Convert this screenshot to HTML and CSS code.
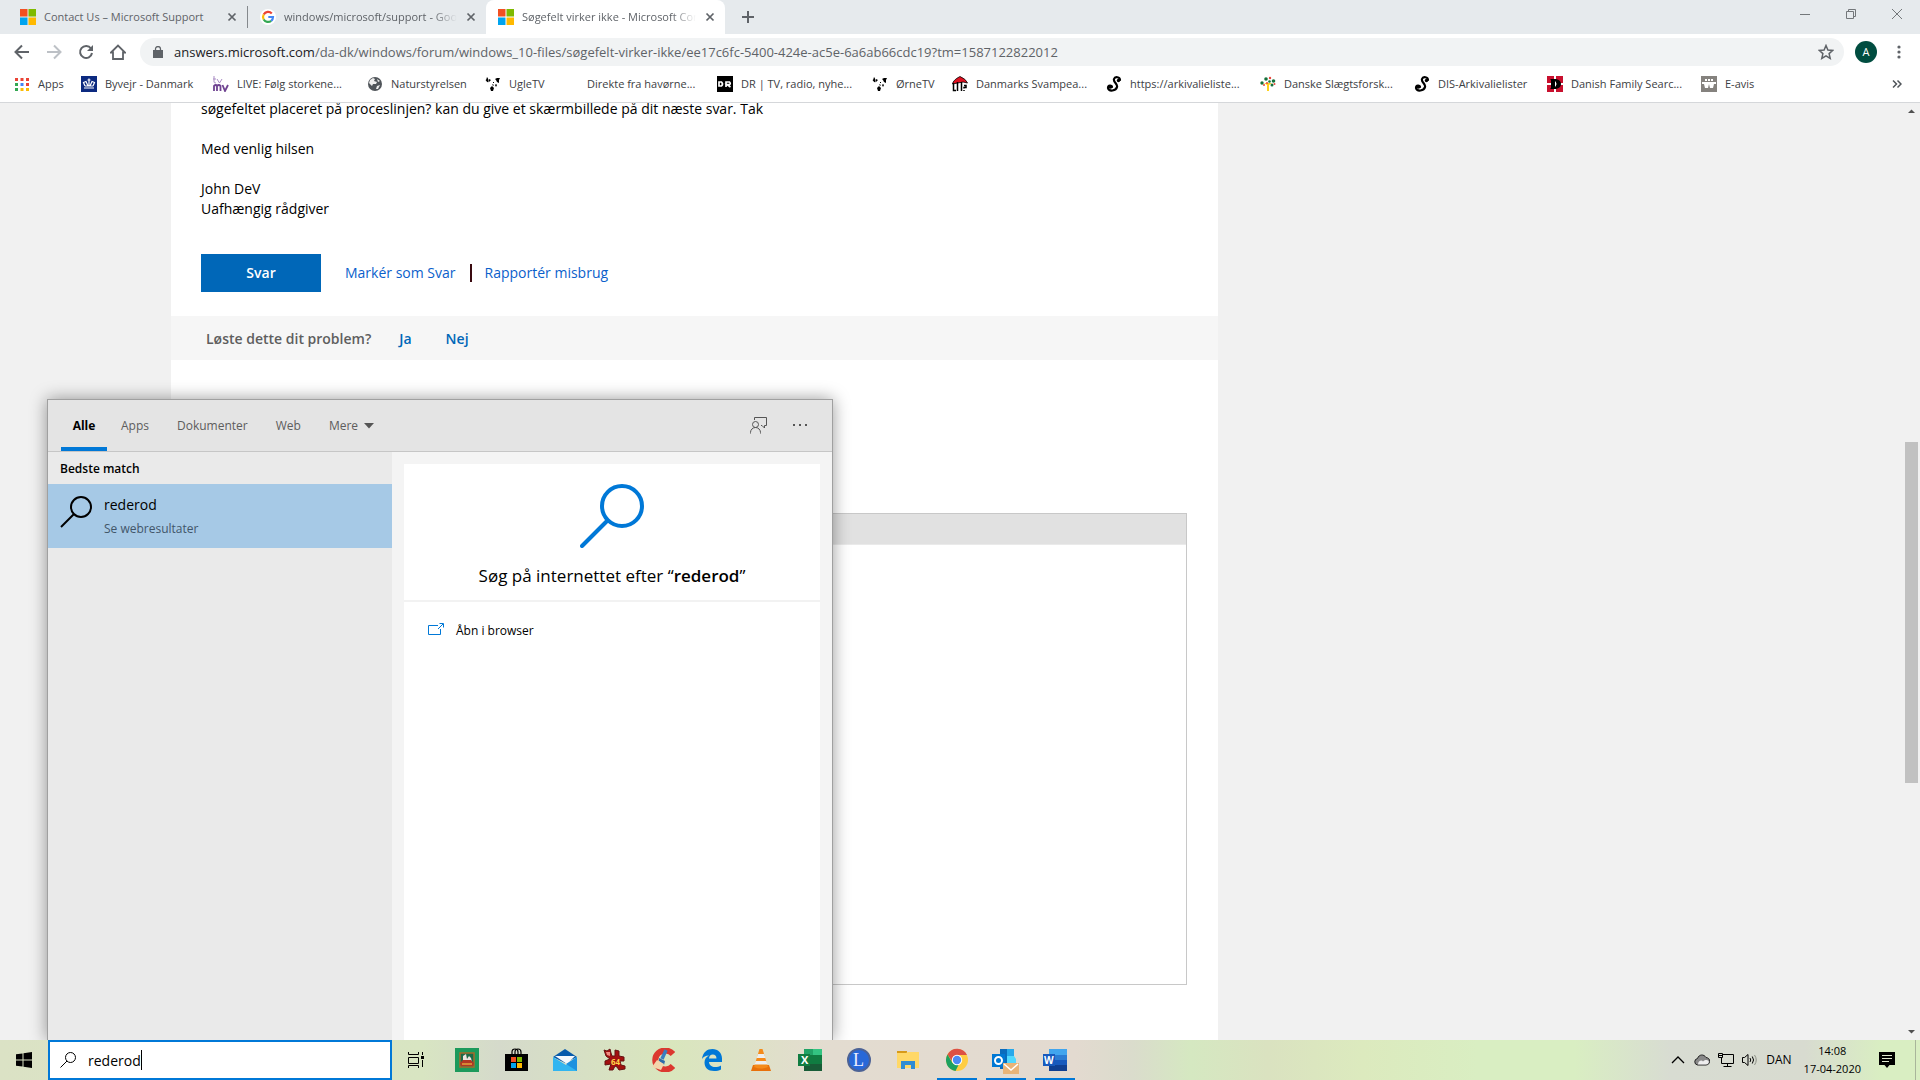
FILE: index.html
```html
<!DOCTYPE html>
<html lang="da">
<head>
<meta charset="utf-8">
<title>Søgefelt virker ikke - Microsoft Community</title>
<link rel="stylesheet" href="styles.css">
</head>
<body>
<svg class="defs" aria-hidden="true">
  <symbol id="ms" viewBox="0 0 16 16"><path fill="#f25022" d="M0 0h7.5v7.5H0z"/><path fill="#7fba00" d="M8.500 0H16v7.500H8.500z"/><path fill="#00a4ef" d="M0 8.500h7.500V16H0z"/><path fill="#ffb900" d="M8.500 8.500H16V16H8.500z"/></symbol>
  <symbol id="x" viewBox="0 0 10 10"><path d="M1.500 1.500l7 7m0-7l-7 7" stroke="#5f6368" stroke-width="1.700" fill="none"/></symbol>
  <symbol id="birds" viewBox="0 0 16 16"><path d="M2 1c1 1 2 3 1.500 5-1 1-2-1-3-2 1 0 1-2 1.500-3zM4 3l2 1-2 2zM10 3l2-1 3 0-1 2 0 3-2-1-1-2zM7 8l2 1-1 1zM5 12l2-2 2 2-1 3-2 0zM10 9l1-1 1 1-1 2zM8 6h1v1H8z"/></symbol>
  <symbol id="ess" viewBox="0 0 16 16"><path d="M14 4c0-3-5-4-6-1-1 3 4 5 3 8-1 4-8 5-9 1 0-3 4-3 4-1" fill="none" stroke="#000" stroke-width="2.200" stroke-linecap="round"/><circle cx="12.500" cy="4.500" r="1.700"/><circle cx="4.500" cy="11" r="1.800"/></symbol>
  <symbol id="mag" viewBox="0 0 32 32"><circle cx="21" cy="11" r="10"/><path d="M14 18L1 31"/></symbol>
</svg>
<div class="window">
  <header class="chrome">
    <div class="tabstrip">
      <div class="tab"><svg class="i16"><use href="#ms"/></svg><span class="tab-title">Contact Us – Microsoft Support</span><button class="tab-close" aria-label="Luk fane"><svg><use href="#x"/></svg></button></div>
      <div class="tab divided"><svg class="i16" viewBox="0 0 16 16"><circle cx="8" cy="8" r="8" fill="#fff"/><g fill="none" stroke-width="2.200"><path d="M11.800 4.500A5 5 0 0 0 3.700 5.500" stroke="#ea4335"/><path d="M3.700 5.500a5 5 0 0 0 0 5" stroke="#fbbc05"/><path d="M3.700 10.500a5 5 0 0 0 7.500 1.300" stroke="#34a853"/><path d="M11.200 11.800A5 5 0 0 0 13 8H8.300" stroke="#4285f4"/></g></svg><span class="tab-title fade">windows/microsoft/support - Google-søgning</span><button class="tab-close" aria-label="Luk fane"><svg><use href="#x"/></svg></button></div>
      <div class="tab active"><svg class="i16"><use href="#ms"/></svg><span class="tab-title fade">Søgefelt virker ikke - Microsoft Community</span><button class="tab-close" aria-label="Luk fane"><svg><use href="#x"/></svg></button></div>
      <button class="new-tab" aria-label="Ny fane"><svg viewBox="0 0 14 14"><path d="M7 1v12M1 7h12" stroke="#5f6368" stroke-width="2"/></svg></button>
      <div class="win-controls">
        <button aria-label="Minimer"><svg viewBox="0 0 10 10"><path d="M0 5.500h10"/></svg></button>
        <button aria-label="Gendan"><svg viewBox="0 0 10 10"><path d="M.5 2.500h7v7h-7zM2.500 2.500v-2h7v7h-2"/></svg></button>
        <button aria-label="Luk"><svg viewBox="0 0 10 10"><path d="M0 0l10 10M10 0L0 10"/></svg></button>
      </div>
    </div>
    <div class="toolbar">
      <button aria-label="Tilbage"><svg viewBox="0 0 16 16"><path d="M15 8H2M8 1.500L1.500 8 8 14.500" fill="none" stroke="#5f6368" stroke-width="2"/></svg></button>
      <button aria-label="Frem"><svg viewBox="0 0 16 16"><path d="M1 8h13M8 1.500L14.500 8 8 14.500" fill="none" stroke="#bdc1c6" stroke-width="2"/></svg></button>
      <button aria-label="Genindlæs"><svg viewBox="0 0 16 16"><path d="M13 4.500A6 6 0 1 0 14 9" fill="none" stroke="#5f6368" stroke-width="2"/><path d="M15 1v6H9z" fill="#5f6368"/></svg></button>
      <button aria-label="Startside"><svg viewBox="0 0 16 16"><path d="M1 8.500L8 1.500l7 7h-2V15H3V8.500z" fill="none" stroke="#5f6368" stroke-width="1.800"/></svg></button>
      <div class="omnibox">
        <svg class="lock" viewBox="0 0 10 12"><path d="M0 4h10v8H0z" fill="#5f6368"/><path d="M2.500 4.500V3a2.500 2.500 0 0 1 5 0v1.500" fill="none" stroke="#5f6368" stroke-width="1.300"/></svg>
        <span class="url"><b>answers.microsoft.com</b>/da-dk/windows/forum/windows_10-files/søgefelt-virker-ikke/ee17c6fc-5400-424e-ac5e-6a6ab66cdc19?tm=1587122822012</span>
        <button aria-label="Tilføj bogmærke"><svg viewBox="0 0 16 16"><path d="M8 1.500l1.900 4.500 4.900.4-3.700 3.200 1.100 4.800L8 11.800l-4.200 2.600 1.100-4.800L1.200 6.400 6.100 6z" fill="none" stroke="#5f6368" stroke-width="1.500"/></svg></button>
      </div>
      <button class="avatar">A</button>
      <button aria-label="Menu"><svg viewBox="0 0 16 16" fill="#5f6368"><circle cx="8" cy="3" r="1.600"/><circle cx="8" cy="8" r="1.600"/><circle cx="8" cy="13" r="1.600"/></svg></button>
    </div>
    <nav class="bookmarks" aria-label="Bogmærker">
      <a href="#"><svg viewBox="0 0 16 16"><path fill="#ea4335" d="M1 2h3v3H1zM6.500 2h3v3h-3zM12 2h3v3h-3zM12 7h3v3h-3z"/><path fill="#34a853" d="M1 7h3v3H1zM1 12h3v3H1z"/><path fill="#4285f4" d="M6.500 7h3v3h-3z"/><path fill="#fbbc05" d="M6.500 12h3v3h-3zM12 12h3v3h-3z"/></svg>Apps</a>
      <a href="#"><svg viewBox="0 0 16 16"><path fill="#0c2a80" d="M0 0h16v16H0z"/><path d="M3 12h10M4 10L2.500 6.500 5 5.500l2 4.500M12 10l1.500-3.500L11 5.500 9 10M8 2.500V10M6.500 4h3M4 10h8" fill="none" stroke="#fff" stroke-width="1.200"/></svg>Byvejr - Danmark</a>
      <a href="#"><svg viewBox="0 0 16 16" fill="none"><path d="M1 0v6q0 1 2 1M0 3h3M4 3l2.500 4L9 3" stroke="#a98cc4"/><path d="M1 15v-5q2-2 3 0v5-5q2-2 3.500 0v5M9.500 9l2.500 6 3-6" stroke="#6f4391" stroke-width="1.800"/></svg>LIVE: Følg storkene...</a>
      <a href="#"><svg viewBox="0 0 16 16"><circle cx="8" cy="8" r="7" fill="#50555a"/><path d="M3 4l3-2 2 1-1 2 3 1-1 2H6L5 10 2 7zM10 10l3-1-2 4-2 0zM10 3l3 2-2 1z" fill="#eee"/></svg>Naturstyrelsen</a>
      <a href="#"><svg><use href="#birds"/></svg>UgleTV</a>
      <a href="#"><svg></svg>Direkte fra havørne...</a>
      <a href="#"><svg viewBox="0 0 16 16"><path d="M0 0h16v16H0z"/><path d="M2 6v4h2.500q2-2 0-4zM9 11V6h3.500q1.500 1.500 0 2.500H10l3.500 2.500" fill="none" stroke="#fff" stroke-width="1.700"/></svg>DR | TV, radio, nyhe...</a>
      <a href="#"><svg><use href="#birds"/></svg>ØrneTV</a>
      <a href="#"><svg viewBox="0 0 16 16"><path d="M.5 8Q1 4 8 .5 14 3 15.500 7L11 6z" fill="#e01020" stroke="#000" stroke-width=".8"/><path d="M1.500 7v7.500H4M5.500 6v9M9.500 6v9M12 9.500h2v2h-2v1M12 14v1" fill="none" stroke="#000" stroke-width="1.500"/></svg>Danmarks Svampea...</a>
      <a href="#"><svg><use href="#ess"/></svg>https://arkivalieliste...</a>
      <a href="#"><svg viewBox="0 0 16 16"><path d="M7 15V9L4 7h8L9 9v6z" fill="#ffd21c"/><g fill="#16713b"><circle cx="6" cy="3" r="1.800"/><circle cx="2" cy="7" r="1.700"/><circle cx="13.500" cy="5" r="1.800"/><circle cx="12" cy="9" r="1.500"/><circle cx="9.500" cy="5.500" r="1.300"/></g><g fill="#e8463a"><circle cx="4" cy="9" r="1"/><circle cx="10" cy="2" r="1.200"/><circle cx="7" cy="7" r="1"/><circle cx="14.500" cy="8" r="1"/></g></svg>Danske Slægtsforsk...</a>
      <a href="#"><svg><use href="#ess"/></svg>DIS-Arkivalielister</a>
      <a href="#"><svg viewBox="0 0 16 16"><path d="M0 0h16v16H0z" fill="#c8102e"/><path d="M7 0h2v16H7zM0 7h16v2H0z" fill="#fff"/><path d="M3 3h6q5 1 5 5t-5 5H3l1-1V4zM8 5v6q3-3 0-6z" fill-rule="evenodd"/></svg>Danish Family Searc...</a>
      <a href="#"><svg viewBox="0 0 16 16"><path d="M0 0h16v16H0z" fill="#85827e"/><path d="M1 6h14v2h-2l-1 4h-3L8 8l-1 4H4L3 8H1zM4 3h2v2H4zM7 3h2v2H7zM10 3h2v2h-2z" fill="#fff"/></svg>E-avis</a>
      <button class="more" aria-label="Flere bogmærker"><svg viewBox="0 0 10 10"><path d="M1 1.500L4.500 5 1 8.500M5.500 1.500L9 5 5.500 8.500" fill="none" stroke="#50555a" stroke-width="1.500"/></svg></button>
    </nav>
  </header>

  <main class="page">
    <article class="card">
      <div class="answer">
        <p>søgefeltet placeret på proceslinjen? kan du give et skærmbillede på dit næste svar. Tak</p>
        <p>Med venlig hilsen</p>
        <p>John DeV<br>Uafhængig rådgiver</p>
        <div class="actions"><button class="reply">Svar</button><a href="#">Markér som Svar</a><a href="#" class="report">Rapportér misbrug</a></div>
      </div>
      <div class="solved"><span>Løste dette dit problem?</span><a href="#">Ja</a><a href="#">Nej</a></div>
      <div class="editor"><div class="editor-bar"></div><textarea aria-label="Svar"></textarea></div>
    </article>
    <div class="scrollbar" aria-hidden="true"><svg viewBox="0 0 17 17"><path d="M5 10h7L8.500 6.500z"/></svg><div class="track"><div class="thumb"></div></div><svg viewBox="0 0 17 17"><path d="M5 7h7L8.500 10.500z"/></svg></div>

    <section class="search-panel" aria-label="Søg">
      <div class="scopes">
        <button class="on">Alle</button><button>Apps</button><button>Dokumenter</button><button>Web</button><button>Mere <svg viewBox="0 0 10 6"><path d="M0 0h10L5 5.500z" fill="#555"/></svg></button>
        <button class="tool feedback" aria-label="Feedback"><svg viewBox="0 0 17 17" fill="none" stroke="#555"><path d="M4.500 3V.5h12v8h-2v2.500l-2.500-2.500h-1"/><circle cx="5.500" cy="7.500" r="3"/><path d="M.5 16.500v-1a5 5 0 0 1 10 0v1"/></svg></button>
        <button class="tool" aria-label="Indstillinger"><svg viewBox="0 0 17 17" fill="#555"><path d="M1 7h2v2H1zM7 7h2v2H7zM13 7h2v2h-2z"/></svg></button>
      </div>
      <div class="results">
        <div class="matches">
          <h2>Bedste match</h2>
          <a href="#" class="match"><svg class="m32"><use href="#mag"/></svg><span><strong>rederod</strong><small>Se webresultater</small></span></a>
        </div>
        <div class="detail"><div class="detail-card">
          <div class="hero"><svg viewBox="0 0 64 64" fill="none" stroke="#0078d7" stroke-width="4" stroke-linecap="round"><circle cx="42" cy="22" r="20"/><path d="M27 37L2 62"/></svg><p>Søg på internettet efter “<b>rederod</b>”</p></div>
          <a href="#" class="open"><svg viewBox="0 0 16 12" fill="none" stroke="#0078d7"><path d="M10 2.500H.5v9h12V6M10 6l5-5M11.500.5h4v4"/></svg>Åbn i browser</a>
        </div></div>
      </div>
    </section>
  </main>

  <footer class="taskbar">
    <button class="start" aria-label="Start"><svg viewBox="0 0 16 16"><path d="M0 2.300L6.500 1.400v6.100H0zM7.500 1.200L16 0v7.500H7.500zM0 8.500h6.500v6.100L0 13.700zM7.500 8.500H16V16l-8.500-1.200z"/></svg></button>
    <label class="searchbox"><svg><use href="#mag"/></svg><input type="text" value="rederod" aria-label="Søg"><span class="caret"></span></label>
    <div class="apps">
      <button class="taskview" aria-label="Opgavevisning"><svg viewBox="0 0 16 16" fill="none" stroke="#000"><path d="M.5 0v2.500h10V0M.5 5.500h10v6H.5zM.5 16v-2.500h10V16M14.500 0v3M14.500 8v7"/><path d="M13 4h3v3h-3z" fill="#000" stroke="none"/></svg></button>
      <button aria-label="Kabale"><svg viewBox="0 0 24 24"><path fill="#1c9a5b" d="M0 0h24v24H0z"/><path fill="#1b6b48" stroke="#a86b2b" stroke-width="1.500" d="M5 5h14v14H5z"/><path d="M8 8l3-2 1 5 2-3 2 2 1 4H8z" fill="#eee5df"/><path d="M5 15l3-3h8l3 3-1 3H6z" fill="#b23724"/><path d="M7 16h10" stroke="#e2a53b" stroke-width="1.500"/></svg></button>
      <button aria-label="Microsoft Store"><svg viewBox="0 0 24 24"><path d="M1 6h23v17H1z"/><path d="M8 6V4q0-3 3-3 3 0 3 3v2M11 6V4q0-3 3-3 3 0 3 3v2" fill="none" stroke="#000" stroke-width="1.200"/><path fill="#f25022" d="M7 9h5v5H7z"/><path fill="#7fba00" d="M13 9h5v5h-5z"/><path fill="#00a4ef" d="M7 15h5v5H7z"/><path fill="#ffb900" d="M13 15h5v5h-5z"/></svg></button>
      <button aria-label="Mail"><svg viewBox="0 0 24 24"><path fill="#075aab" d="M0 9L12 1l12 8-12 6z"/><path fill="#f6f9fc" d="M2 8h20l-8 8z"/><path fill="#32b5f0" d="M0 9l13 8 11-8v14H0z"/><path fill="#1d91df" d="M24 9v14L13 16z"/></svg></button>
      <button aria-label="IrfanView"><svg viewBox="0 0 24 24"><path fill="#a30f0f" stroke="#641313" d="M2 2l3 1 3-2 1 4 1 3 3 0V2l4 1v5l5 1 0 4-4 0 1 4 4 1v3l-6 1-2-3-2-1-2 4-4 0 2-6-6 1 0-4 5-2-4-3z"/><path fill="#ef8b81" d="M4 4l4 0 0 4-3-1z"/><text x="9" y="17" font-size="8" font-weight="700" fill="#ffd54a">64</text></svg></button>
      <button aria-label="CCleaner"><svg viewBox="0 0 24 24"><path d="M22 6A10 9.500 0 1 0 22 18" fill="none" stroke="#dc382f" stroke-width="6"/><path d="M15 2l-4 9" stroke="#3a7fc0" stroke-width="3.500"/><path d="M8 10l6 3-1 4-5-4z" fill="#2d6caa"/><path d="M6 12l7 4-3 6-9-3z" fill="#f3d5ac"/></svg></button>
      <button aria-label="Microsoft Edge"><svg viewBox="0 0 24 24"><path fill="#0078d7" d="M2 11C3 4 7 1 12.500 1 18 1 22 5 22 10.500V14H9c.2 3.500 3 5 6 5 2.300 0 4.300-.5 6-1.500v4c-2 1-4 1.500-7 1.500-6 0-9.500-3.500-9.500-8.500 0-3.300 1.700-5.800 4.500-7C5.500 7.500 3.500 9 2 11zm7-.6h7.500C16.500 8 15 6.500 12.800 6.500S9.200 8 9 10.400z"/></svg></button>
      <button aria-label="VLC"><svg viewBox="0 0 24 24"><path fill="#e8700a" d="M4 17h16l2 6H2z"/><path fill="#f58a19" d="M10.500 1h3L19 19q-7 3-14 0z"/><path fill="#eee" d="M9 6h6l1.500 4h-9zM6.600 13h10.800l1 3.500H5.600z"/></svg></button>
      <button aria-label="Excel"><svg viewBox="0 0 24 24"><path fill="#21a366" d="M6 1h9v8H6z"/><path fill="#33c481" d="M15 1h9v6h-9z"/><path fill="#107c41" d="M6 7h18v9H6z"/><path fill="#185c37" d="M6 16h18v7H6z"/><path fill="#107c41" d="M0 6h12v12H0z"/><text x="3" y="16" font-size="11" font-weight="700" fill="#fff">X</text></svg></button>
      <button aria-label="Lexmark"><svg viewBox="0 0 24 24"><circle cx="12" cy="12" r="11" fill="#2868d8" stroke="#4c6295" stroke-width="2"/><text x="6" y="18" font-size="18" class="serif" fill="#eef">L</text></svg></button>
      <button aria-label="Stifinder"><svg viewBox="0 0 24 24"><path fill="#d79a19" d="M1 3h10v5H1z"/><path fill="#ffd868" d="M1 5h9l2-1h11v16H1z"/><path fill="#2f8cd4" d="M5 13h14v8h-4v-4H9v4H5z"/></svg></button>
      <button class="running" aria-label="Chrome"><svg viewBox="0 0 24 24"><circle cx="12" cy="12" r="11" fill="#ffcd42"/><path fill="#dd5144" d="M2.500 6.500A11 11 0 0 1 22 7H12L7.500 14z"/><path fill="#1da160" d="M2.500 6.500l5 8.500 6 2-3 6A11 11 0 0 1 2.500 6.500z"/><circle cx="12" cy="12" r="5.200" fill="#fff"/><circle cx="12" cy="12" r="4.200" fill="#4b8bf4"/></svg></button>
      <button class="running" aria-label="Outlook"><svg class="wide" viewBox="0 0 28 28"><path fill="#0a6bbd" d="M8 3h14v20H8z"/><path fill="#28a8ea" d="M15 3h7v7h-7z"/><path fill="#50d9ff" d="M15 10h7l2 3v10h-9z"/><path fill="#0078d4" d="M0 8h13v13H0z"/><circle cx="6.500" cy="14.500" r="3.500" fill="none" stroke="#fff" stroke-width="2"/><path fill="#e8b478" d="M11 17h16v11H11z"/><path d="M12 18l7 6 7-6" fill="none" stroke="#fff" stroke-width="1.500"/></svg></button>
      <button class="running" aria-label="Word"><svg viewBox="0 0 24 24"><path fill="#41a5ee" d="M6 1h18v6H6z"/><path fill="#2b7cd3" d="M6 7h18v5H6z"/><path fill="#185abd" d="M6 12h18v5H6z"/><path fill="#103f91" d="M6 17h18v6H6z"/><path fill="#185abd" d="M0 6h12v12H0z"/><text x="1" y="16" font-size="10" font-weight="700" fill="#fff">W</text></svg></button>
    </div>
    <div class="tray">
      <svg viewBox="0 0 16 16" fill="none" stroke="#000" stroke-width="1.300"><path d="M2 11l6-6 6 6"/></svg>
      <svg viewBox="0 0 16 16"><path d="M3.500 13a3.300 3.300 0 0 1 0-6.500C5 2 10 2 12 5.500c5 .5 5 7 0 7.500z" fill="#888" stroke="#222"/><path d="M4 12.500c0-4 4-5 5-3 3-3 7-1 5.500 1.500-.5 1.500-2 1.500-4 1.500z" fill="#eee"/></svg>
      <svg viewBox="0 0 16 16" fill="none" stroke="#000"><path d="M5 2.500h10.500v9H3.500V6M9.500 11.500v3M5.500 14.500h8M.5 1.500h4v4h-4zM1 3.500h3"/></svg>
      <svg viewBox="0 0 16 16" fill="none" stroke="#000"><path d="M.5 5.500h2l3.500-3v11l-3.500-3h-2zM8 6q1.500 2 0 4M10.300 4.500q2.500 3.500 0 7"/><path d="M12.500 3q3.500 5 0 10" stroke="#8c9086"/></svg>
      <span class="lang">DAN</span>
      <time class="clock">14:08<br>17-04-2020</time>
      <svg class="note" viewBox="0 0 16 16"><path d="M0 0h16v13h-5.500L8 16l-2.500-3H0z"/><path d="M3 3.500h10M3 6.500h10M3 9.500h7" stroke="#e0e8d0"/></svg>
    </div>
  </footer>
</div>
</body>
</html>
```
FILE: styles.css
```css
* { box-sizing: border-box; }
body { margin: 0; font: 14px/20px "Open Sans", "Noto Sans", sans-serif; color: #000; }
button { border: 0; padding: 0; background: none; font: inherit; color: inherit; display: flex; align-items: center; justify-content: center; }
a { color: #0b5fcb; text-decoration: none; }
p, h2 { margin: 0; }
svg { display: block; flex: none; }
.defs { position: absolute; width: 0; height: 0; }
.i16 { width: 16px; height: 16px; }
.window { display: flex; flex-direction: column; height: 100vh; overflow: hidden; }

/* Browser frame */
.chrome { background: #fff; border-bottom: 1px solid #d5d7da; color: #3c4043; }
.tabstrip { display: flex; height: 34px; background: #e6eaed; font-size: 11px; }
.tab { display: flex; align-items: center; width: 239px; padding: 0 7px 0 12px; color: #5f6368; }
.tab:first-child { width: 247px; padding-left: 20px; }
.tab-title { flex: 1; min-width: 0; margin: 0 6px 0 8px; white-space: nowrap; overflow: hidden; }
.fade { mask-image: linear-gradient(90deg, #000 86%, transparent); }
.tab-close { width: 16px; height: 16px; }
.tab-close svg { width: 10px; height: 10px; }
.divided { border-left: 1px solid #85898d; border-image: linear-gradient(transparent 20%, #85898d 20% 80%, transparent 80%) 1; }
.active { background: #fff; border-radius: 8px 8px 0 0; }
.new-tab { width: 46px; }
.new-tab svg { width: 14px; height: 14px; }
.win-controls { display: flex; margin-left: auto; height: 28px; }
.win-controls button { width: 46px; }
.win-controls svg { width: 10px; height: 10px; fill: none; stroke: #73777a; }
.toolbar { display: flex; align-items: center; height: 36px; padding: 0 5px 0 6px; }
.toolbar button { width: 32px; height: 28px; }
.toolbar svg { width: 16px; height: 16px; }
.omnibox { flex: 1; display: flex; align-items: center; height: 28px; margin: 0 11px 0 6px; padding: 0 2px 0 13px; border-radius: 14px; background: #f1f3f4; font-size: 13px; color: #5f6368; }
.omnibox .lock { width: 10px; height: 12px; }
.url { flex: 1; margin-left: 11px; white-space: nowrap; }
.url b { font-weight: 400; color: #202124; }
.toolbar .avatar { width: 22px; height: 22px; margin-right: 6px; border-radius: 50%; background: #004d40; color: #fff; font-size: 11px; }
.bookmarks { display: grid; grid-template-columns: 67px 132px 154px 118px 78px 154px 155px 80px 154px 154px 154px 133px 154px 1fr 24px; align-items: center; height: 32px; padding: 0 11px 4px 14px; font-size: 11px; }
.bookmarks a { display: flex; align-items: center; gap: 8px; color: #3c4043; white-space: nowrap; }
.bookmarks svg { width: 16px; height: 16px; }
.bookmarks .more svg { width: 10px; height: 10px; }

/* Forum page */
.page { position: relative; flex: 1; min-height: 0; display: flex; justify-content: space-between; background: #f1f1f1; overflow: hidden; }
.card { width: 1047px; margin-left: 171px; background: #fff; }
.answer { padding: 0 30px 24px; margin-top: -4px; }
.answer p { margin-bottom: 20px; }
.actions { display: flex; align-items: center; padding-top: 15px; }
.reply { width: 120px; height: 38px; margin-right: 24px; background: #0067b8; color: #fff; font-weight: 600; }
.report { margin-left: 14px; padding-left: 15px; background: linear-gradient(#3a0a10, #3a0a10) 0 1px / 2px 18px no-repeat; }
.solved { display: flex; align-items: center; gap: 28px; height: 44px; padding: 2px 35px 0; background: #f6f6f6; color: #5e5e5e; font-weight: 600; }
.solved a { color: #0067b8; margin-right: 6px; }
.editor { margin: 153px 31px 0 30px; height: 472px; display: flex; flex-direction: column; border: 1px solid #c8c8c8; }
.editor-bar { height: 31px; background: #e1e1e1; border-bottom: 1px solid #eaeaea; }
.editor textarea { flex: 1; border: 0; resize: none; }
.scrollbar { display: flex; flex-direction: column; width: 17px; background: #f1f1f1; }
.scrollbar svg { width: 17px; height: 17px; fill: #505050; }
.track { flex: 1; padding-top: 322px; }
.thumb { height: 341px; margin: 0 2px; background: #c1c1c1; }

/* Windows search flyout, floating over the browser */
.search-panel { position: absolute; left: 47px; bottom: 0; width: 786px; height: 641px; display: flex; flex-direction: column; border: 1px solid #a0a0a0; border-bottom: 0; background: #f4f4f4; box-shadow: 0 0 16px rgba(0, 0, 0, .4); font-size: 12px; }
.scopes { display: flex; height: 52px; padding: 0 11px 0 13px; background: #e4e4e4; border-bottom: 1px solid #c6c6c6; }
.scopes button { padding: 0 14px; color: #5d5d5d; gap: 6px; }
.scopes .on { width: 46px; padding: 4px 0 0; border-bottom: 4px solid #0078d7; color: #000; font-weight: 700; }
.scopes button svg { width: 10px; height: 6px; }
.scopes .tool { padding: 0; width: 42px; }
.scopes .feedback { margin-left: auto; }
.scopes .tool svg { width: 17px; height: 17px; }
.results { flex: 1; display: flex; }
.matches { width: 344px; background: #eaeaea; }
.matches h2 { height: 32px; padding: 2px 12px 0; font-size: 12px; line-height: 30px; }
.match { display: flex; align-items: center; gap: 12px; height: 64px; padding: 2px 12px 0; background: #a6c9e6; color: #000; }
.m32 { width: 32px; height: 32px; margin-bottom: 10px; fill: none; stroke: #000; stroke-width: 2px; }
.match strong, .match small { display: block; line-height: 24px; font-weight: 400; }
.match strong { font-size: 14px; }
.match small { font-size: 12px; color: #42566a; }
.detail { flex: 1; display: flex; padding: 12px 12px 0; }
.detail-card { flex: 1; background: #fff; }
.hero { display: flex; flex-direction: column; align-items: center; padding: 20px 0 10px; gap: 14px; border-bottom: 2px solid #f2f2f2; font-size: 17px; line-height: 28px; }
.hero svg { width: 64px; height: 64px; }
.hero b, .matches h2 { font-weight: 600; }
.open { display: flex; align-items: center; gap: 12px; padding: 19px 24px; color: #000; }
.open svg { width: 16px; height: 12px; margin-bottom: 4px; }

/* Taskbar */
.taskbar { display: flex; height: 40px; background: linear-gradient(90deg, #dbe2c5 0, #d8e5c2 22%, #d5dacb 26%, #d9e6bd 35%, #e3dcd0 43%, #e3dad0 56%, #dadccc 59%, #d5e8c1 62%, #dae2c0 66%, #dceabe 71%, #d9eec2 77%, #d9eec2 82%, #d8dcd2 87%, #d8dbd0 94%, #d9eec2 98%); }
.start { width: 48px; }
.start svg { width: 16px; height: 16px; }
.searchbox { display: flex; align-items: center; width: 344px; padding-left: 10px; border: 2px solid #0078d7; background: #fff; }
.searchbox svg { width: 16px; height: 16px; margin-right: 12px; fill: none; stroke: #000; stroke-width: 2px; }
.searchbox input { field-sizing: content; border: 0; padding: 2px 0 0; outline: 0; background: none; font: inherit; }
.caret { width: 1px; height: 20px; background: #000; }
.apps { display: flex; gap: 9px; }
.apps button { width: 40px; border-bottom: 2px solid transparent; padding-top: 2px; }
.apps .running { border-color: #0078d7; }
.apps .taskview { width: 40px; margin: 0 2px 0 4px; }
.apps svg { width: 24px; height: 24px; }
.apps .taskview svg { width: 16px; height: 16px; }
.apps .wide { width: 28px; height: 28px; }
.serif { font-family: "Liberation Serif", serif; }
.tray { display: flex; align-items: center; gap: 8px; margin: 0 4px 0 auto; padding-right: 20px; border-right: 1px solid #a9b59b; font-size: 11px; }
.tray svg { width: 16px; height: 16px; }
.lang { font-size: 12px; }
.clock { line-height: 18px; text-align: center; margin: 0 10px 0 4px; }
```
